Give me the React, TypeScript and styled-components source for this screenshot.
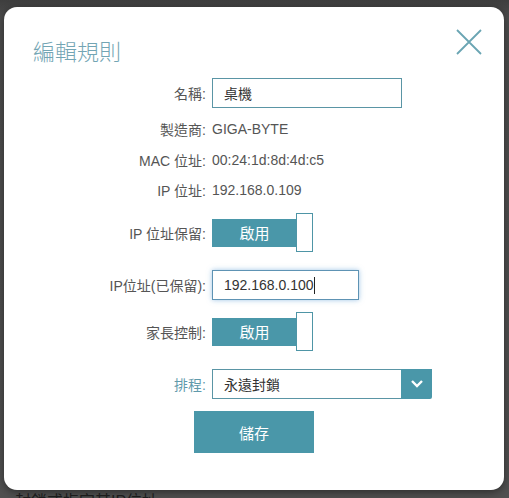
import React from "react";
import styled, { createGlobalStyle } from "styled-components";

const GlobalStyle = createGlobalStyle`
  html, body { margin: 0; padding: 0; }
  body {
    width: 509px;
    height: 498px;
    overflow: hidden;
    background: #4f4f4f;
    font-family: "Liberation Sans", "Noto Sans CJK TC", sans-serif;
  }
`;

const teal = "#4a97a9";

const Page = styled.div`
  position: relative;
  width: 509px;
  height: 498px;
  overflow: hidden;
  background: linear-gradient(#3e3e3e 0px, #4d4d4d 18px, #505050 100%);
`;

const PageText = styled.div`
  padding: 492px 0 0 15px;
  font-size: 16px;
  color: #1f1f1f;
  font-family: "Liberation Sans", "Noto Sans CJK TC", sans-serif;
  line-height: 20px;
`;

const Modal = styled.div`
  position: absolute;
  left: 4px;
  top: 7px;
  width: 500px;
  height: 483px;
  box-sizing: border-box;
  background: #fff;
  border-radius: 13px;
  box-shadow: 0 2px 8px rgba(0, 0, 0, 0.45);
  padding: 22px 22px 0 29px;
  display: flex;
  flex-direction: column;
`;

const Header = styled.div`
  display: flex;
  justify-content: space-between;
  align-items: flex-start;
  height: 34px;
`;

const Title = styled.h2`
  margin: 8px 0 0 0;
  font-family: "Noto Sans CJK TC", sans-serif;
  font-weight: 300;
  font-size: 22px;
  line-height: 26px;
  color: #73a5b4;
`;

const CloseButton = styled.button`
  width: 26px;
  height: 26px;
  padding: 0;
  border: none;
  background: transparent;
  display: flex;
  cursor: pointer;
`;

const Form = styled.div`
  display: flex;
  flex-direction: column;
  margin-left: -29px;
  margin-top: 15px;
`;

const Row = styled.div<{ $mt?: number; $h?: number }>`
  display: flex;
  align-items: center;
  margin-top: ${(p) => p.$mt ?? 0}px;
  height: ${(p) => p.$h ?? 30}px;
`;

const Label = styled.div<{ $accent?: boolean }>`
  width: 202px;
  text-align: right;
  font-size: 14px;
  color: ${(p) => (p.$accent ? "#5f9aab" : "#555")};
  flex-shrink: 0;
`;

const Value = styled.div`
  margin-left: 6px;
  font-size: 14px;
  color: #555;
`;

const TextBox = styled.div<{ $w: number; $focus?: boolean }>`
  margin-left: 6px;
  width: ${(p) => p.$w}px;
  height: 30px;
  box-sizing: border-box;
  border: 1px solid ${(p) => (p.$focus ? "#5e93b4" : "#5a95a5")};
  box-shadow: ${(p) => (p.$focus ? "0 0 5px rgba(80, 150, 210, 0.55)" : "none")};
  padding: 0 0 0 11px;
  display: flex;
  align-items: center;
  font-size: 14px;
  color: #333;
`;

const Caret = styled.span`
  display: inline-block;
  width: 1px;
  height: 17px;
  background: #222;
`;

const Toggle = styled.div`
  margin-left: 6px;
  display: flex;
  align-items: center;
  height: 39px;
`;

const ToggleBar = styled.div`
  width: 85px;
  height: 28px;
  background: ${teal};
  color: #fff;
  font-size: 15px;
  font-family: "Noto Sans CJK TC", sans-serif;
  display: flex;
  align-items: center;
  justify-content: center;
  box-sizing: border-box;
`;

const ToggleKnob = styled.div`
  width: 17px;
  height: 39px;
  box-sizing: border-box;
  border: 1px solid #4e95a6;
  background: #fff;
  margin-left: -1px;
`;

const Select = styled.div`
  margin-left: 6px;
  display: flex;
  height: 30px;
`;

const SelectField = styled.div`
  width: 189px;
  height: 30px;
  box-sizing: border-box;
  border: 1px solid #5a95a5;
  border-right: none;
  padding-left: 11px;
  display: flex;
  align-items: center;
  font-size: 14px;
  color: #333;
  font-family: "Noto Sans CJK TC", sans-serif;
`;

const SelectButton = styled.div`
  width: 31px;
  height: 30px;
  background: ${teal};
  display: flex;
  align-items: center;
  justify-content: center;
  border-radius: 0 0 2px 0;
`;

const SaveRow = styled.div`
  display: flex;
  margin-top: 12px;
  padding-left: 190px;
`;

const SaveButton = styled.button`
  width: 120px;
  height: 42px;
  border: none;
  background: ${teal};
  color: #fff;
  font-size: 15px;
  font-family: "Noto Sans CJK TC", sans-serif;
  padding: 0;
  cursor: pointer;
`;

export default function App() {
  return (
    <>
      <GlobalStyle />
      <Page>
        <PageText>封鎖或指定其IP位址</PageText>
        <Modal>
          <Header>
            <Title>編輯規則</Title>
            <CloseButton aria-label="close">
              <svg width="26" height="26" viewBox="0 0 26 26">
                <path d="M1 1 L25 25 M25 1 L1 25" stroke="#6aa5b3" strokeWidth="1.8" fill="none" />
              </svg>
            </CloseButton>
          </Header>
          <Form>
            <Row>
              <Label>名稱:</Label>
              <TextBox $w={190}>桌機</TextBox>
            </Row>
            <Row $mt={6}>
              <Label>製造商:</Label>
              <Value>GIGA-BYTE</Value>
            </Row>
            <Row $h={31}>
              <Label>MAC 位址:</Label>
              <Value>00:24:1d:8d:4d:c5</Value>
            </Row>
            <Row>
              <Label>IP 位址:</Label>
              <Value>192.168.0.109</Value>
            </Row>
            <Row $mt={8} $h={39}>
              <Label>IP 位址保留:</Label>
              <Toggle>
                <ToggleBar>啟用</ToggleBar>
                <ToggleKnob />
              </Toggle>
            </Row>
            <Row $mt={18}>
              <Label>IP位址(已保留):</Label>
              <TextBox $w={147} $focus>
                192.168.0.100
                <Caret />
              </TextBox>
            </Row>
            <Row $mt={12} $h={39}>
              <Label>家長控制:</Label>
              <Toggle>
                <ToggleBar>啟用</ToggleBar>
                <ToggleKnob />
              </Toggle>
            </Row>
            <Row $mt={18}>
              <Label $accent>排程:</Label>
              <Select>
                <SelectField>永遠封鎖</SelectField>
                <SelectButton>
                  <svg width="14" height="10" viewBox="0 0 14 10">
                    <path d="M2 2 L7 7 L12 2" stroke="#fff" strokeWidth="2.4" fill="none" />
                  </svg>
                </SelectButton>
              </Select>
            </Row>
            <SaveRow>
              <SaveButton>儲存</SaveButton>
            </SaveRow>
          </Form>
        </Modal>
      </Page>
    </>
  );
}
